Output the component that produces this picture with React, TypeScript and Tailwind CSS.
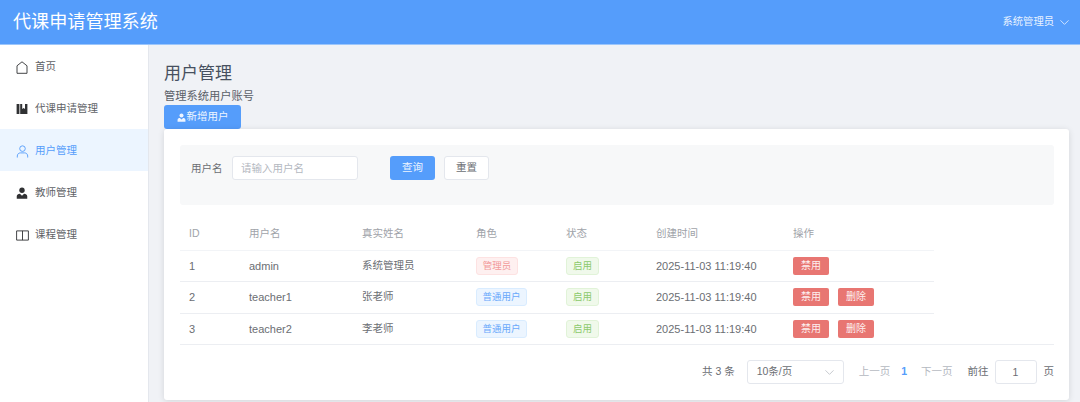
import React from "react";
import { ChevronDown } from "lucide-react";

const font = { fontFamily: '"Liberation Sans","Noto Sans CJK SC",sans-serif' };

function UserSolid({ className }: { className?: string }) {
  return (
    <svg viewBox="0 0 16 16" className={className} fill="currentColor">
      <circle cx="8" cy="4.4" r="3.6" />
      <path d="M1 15.5v-3.2C1 10.2 3 9 5.2 9l2.8 2.6L10.8 9C13 9 15 10.2 15 12.3v3.2z" />
    </svg>
  );
}

function UserIcon({ className }: { className?: string }) {
  return (
    <svg viewBox="0 0 14 14" className={className} fill="none" stroke="currentColor" strokeWidth="1">
      <circle cx="7" cy="3.9" r="3" />
      <path d="M1.4 13.5v-1.6c0-2.2 1.6-3.4 3.4-3.4h4.4c1.8 0 3.4 1.2 3.4 3.4v1.6" />
    </svg>
  );
}

function HouseIcon({ className }: { className?: string }) {
  return (
    <svg viewBox="0 0 12 13" className={className} fill="none" stroke="currentColor" strokeWidth="0.9">
      <path d="M1 12.3V4.8L6 .8l5 4v7.5z" strokeLinejoin="round" />
    </svg>
  );
}

function BooksSolid({ className }: { className?: string }) {
  return (
    <svg viewBox="0 0 12 12" className={className} fill="currentColor">
      <path d="M.6 1h2.8v10H.6z" />
      <path d="M4.2 1h2v5l1.4-1 1.4 1V1h2.4v10H4.2z" />
    </svg>
  );
}

function BookOpen({ className }: { className?: string }) {
  return (
    <svg viewBox="0 0 13 11" className={className} fill="none" stroke="currentColor" strokeWidth="0.9">
      <path d="M.6.9h11.8v9.2H.6zM6.5.9v9.2" />
    </svg>
  );
}

const nav = [
  { label: "首页", icon: <HouseIcon className="w-[12px] h-[13px]" /> },
  { label: "代课申请管理", icon: <BooksSolid className="w-[12px] h-[12px]" /> },
  { label: "用户管理", icon: <UserIcon className="w-[13px] h-[13px]" />, active: true },
  { label: "教师管理", icon: <UserSolid className="w-[12px] h-[12px]" /> },
  { label: "课程管理", icon: <BookOpen className="w-[13px] h-[11px]" /> },
];

const rows = [
  { id: "1", user: "admin", name: "系统管理员", admin: true },
  { id: "2", user: "teacher1", name: "张老师", admin: false },
  { id: "3", user: "teacher2", name: "李老师", admin: false },
];

function DangerBtn({ children }: { children: React.ReactNode }) {
  return (
    <button className="w-[36px] h-[18px] rounded-[2px] bg-[#e87672] text-[#fdeeee] text-[10px] leading-[18px] text-center">
      {children}
    </button>
  );
}

export default function App() {
  return (
    <div style={font} className="w-[1080px] h-[402px] overflow-hidden flex flex-col bg-[#f0f2f6]">
      <header className="h-[45px] shrink-0 bg-[#559dfb] border-b border-[#9cc6fb] flex items-center justify-between pl-[13px] pr-[8px] text-white">
        <span className="text-[18.1px] leading-none">代课申请管理系统</span>
        <span className="flex items-center gap-[3px] text-[10.3px] text-[#e8f2ff]">
          系统管理员
          <ChevronDown className="w-[15px] h-[15px]" strokeWidth={1.3} />
        </span>
      </header>
      <div className="flex flex-1 min-h-0">
        <aside className="w-[149px] shrink-0 bg-white border-r border-[#e4e7ed]">
          {nav.map((n) => (
            <div
              key={n.label}
              className={
                "h-[42px] flex items-center gap-[6px] pl-[15px] pt-[2px] text-[10.5px] " +
                (n.active ? "bg-[#ecf5ff] text-[#559dfb]" : "text-[#303133]")
              }
            >
              <span className="w-[14px] flex justify-center">{n.icon}</span>
              <span className={n.active ? "" : "text-[#606266]"}>{n.label}</span>
            </div>
          ))}
        </aside>
        <main className="flex-1 min-w-0 pl-[15px] pr-[11px] pt-[17px]">
          <h1 className="text-[17px] leading-[24px] text-[#465060] font-normal">用户管理</h1>
          <p className="text-[11.25px] leading-[17px] mt-[2px] text-[#5a6068]">管理系统用户账号</p>
          <button className="w-[77px] h-[24px] rounded-[3px] bg-[#559dfb] text-[#eef5ff] text-[10.5px] flex items-center justify-center gap-[1px]">
            <UserSolid className="w-[9px] h-[9px]" />
            新增用户
          </button>
          <section className="h-[271px] bg-white rounded-[3px] shadow-[0_1px_6px_rgba(0,0,0,0.12)] pt-[16px] pl-[16px] pr-[15px]">
            <div className="h-[60px] bg-[#f7f8f9] rounded-[3px] flex items-start pt-[11px] pl-[11px]">
              <span className="text-[10.5px] leading-[24px] text-[#6b6e73] w-[41px]">用户名</span>
              <div className="w-[126px] h-[24px] bg-white border border-[#e4e7ed] rounded-[3px] pl-[8px] text-[10.5px] leading-[22px] text-[#b4b8bf]">
                请输入用户名
              </div>
              <button className="ml-[32px] w-[45px] h-[24px] rounded-[3px] bg-[#559dfb] text-[#eef5ff] text-[10.5px]">查询</button>
              <button className="ml-[9px] w-[45px] h-[24px] rounded-[3px] bg-white border border-[#e4e7ed] text-[#6b6e73] text-[10.5px]">重置</button>
            </div>
            <div className="mt-[14px] w-[754px] text-[10.5px] text-[#6b6e73]">
              <div className="grid grid-cols-[69px_113px_114px_90px_90px_137px_141px] h-[31.5px] items-center border-b border-[#f2f4f7] text-[#a0a3a9]">
                <span className="pl-[9px]">ID</span>
                <span>用户名</span>
                <span>真实姓名</span>
                <span>角色</span>
                <span>状态</span>
                <span>创建时间</span>
                <span>操作</span>
              </div>
              {rows.map((r) => (
                <div
                  key={r.id}
                  className="grid grid-cols-[69px_113px_114px_90px_90px_137px_141px] h-[31.5px] items-center border-b border-[#eceef2]"
                >
                  <span className="pl-[9px] text-[11px]">{r.id}</span>
                  <span className="text-[11px]">{r.user}</span>
                  <span>{r.name}</span>
                  <span className="flex">
                    {r.admin ? (
                      <span className="w-[42px] h-[18px] leading-[16px] text-center text-[9.5px] rounded-[3px] bg-[#fef0f0] border border-[#fde2e2] text-[#f29a9a]">
                        管理员
                      </span>
                    ) : (
                      <span className="w-[51px] h-[18px] leading-[16px] text-center text-[9.5px] rounded-[3px] bg-[#ecf5ff] border border-[#d9ecff] text-[#6aa9fb]">
                        普通用户
                      </span>
                    )}
                  </span>
                  <span className="flex">
                    <span className="w-[33px] h-[18px] leading-[16px] text-center text-[9.5px] rounded-[3px] bg-[#f0f9eb] border border-[#e1f3d8] text-[#8cc96c]">
                      启用
                    </span>
                  </span>
                  <span className="whitespace-nowrap text-[11px]">2025-11-03 11:19:40</span>
                  <span className="flex gap-[9px]">
                    <DangerBtn>禁用</DangerBtn>
                    {!r.admin && <DangerBtn>删除</DangerBtn>}
                  </span>
                </div>
              ))}
            </div>
            <div className="border-t border-[#eceef2] -mt-px h-[1px]" />
            <div className="mt-[15px] flex items-center justify-end text-[10.5px] text-[#6b6e73]">
              <span className="mr-[12px]">共 3 条</span>
              <div className="w-[97px] h-[24px] border border-[#e4e7ed] rounded-[3px] flex items-center justify-between pl-[9px] pr-[6px] mr-[15px]">
                <span>10条/页</span>
                <ChevronDown className="w-[15px] h-[15px] text-[#b4b8bf]" strokeWidth={1.2} />
              </div>
              <span className="text-[#b4b8bf] mr-[11px]">上一页</span>
              <span className="text-[#559dfb] font-bold mr-[14px]">1</span>
              <span className="text-[#b4b8bf] mr-[15px]">下一页</span>
              <span className="mr-[6px]">前往</span>
              <div className="w-[42px] h-[24px] border border-[#e4e7ed] rounded-[3px] text-center leading-[22px] mr-[7px]">1</div>
              <span>页</span>
            </div>
          </section>
        </main>
      </div>
    </div>
  );
}
